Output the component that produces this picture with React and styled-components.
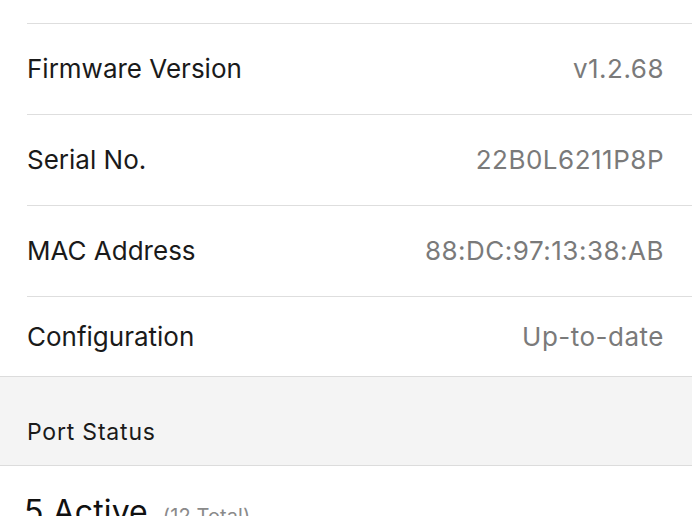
import React from "react";
import styled, { createGlobalStyle } from "styled-components";

const Global = createGlobalStyle`
  html, body { margin: 0; padding: 0; background: #fff; }
  body { font-family: Inter, "Noto Sans", sans-serif; -webkit-font-smoothing: antialiased; }
`;

const Page = styled.div`
  width: 692px;
  height: 516px;
  overflow: hidden;
  background: #fff;
`;

const List = styled.div`
  padding-top: 23px;
`;

const Row = styled.div`
  margin-left: 27px;
  padding-right: 28px;
  height: ${(p) => p.$h}px;
  border-top: 1px solid #dedede;
  display: flex;
  align-items: center;
  justify-content: space-between;
  box-sizing: border-box;
  padding-bottom: 1px;
`;

const Label = styled.span`
  font-size: 26px;
  color: #1a1a1a;
`;

const Value = styled.span`
  font-size: 26px;
  letter-spacing: 0.5px;
  color: #7a7a7a;
`;

const SectionHeader = styled.div`
  background: #f4f4f4;
  border-top: 1px solid #dcdcdc;
  border-bottom: 1px solid #dcdcdc;
  height: 90px;
  box-sizing: border-box;
  display: flex;
  align-items: flex-end;
  padding: 0 0 19px 27px;
`;

const HeaderText = styled.span`
  font-size: 23px;
  letter-spacing: 0.8px;
  color: #1a1a1a;
`;

const Summary = styled.div`
  display: flex;
  align-items: baseline;
  gap: 15px;
  padding: 26px 0 0 24px;
`;

const Big = styled.span`
  font-size: 32px;
  font-weight: 400;
  letter-spacing: 0.1px;
  color: #111;
`;

const Small = styled.span`
  font-size: 20px;
  letter-spacing: 0.1px;
  color: #8a8a8a;
`;

const rows = [
  ["Firmware Version", "v1.2.68", 91],
  ["Serial No.", "22B0L6211P8P", 91],
  ["MAC Address", "88:DC:97:13:38:AB", 91],
  ["Configuration", "Up-to-date", 80],
];

export default function App() {
  return (
    <Page>
      <Global />
      <List>
        {rows.map(([l, v, h]) => (
          <Row key={l} $h={h}>
            <Label>{l}</Label>
            <Value>{v}</Value>
          </Row>
        ))}
      </List>
      <SectionHeader>
        <HeaderText>Port Status</HeaderText>
      </SectionHeader>
      <Summary>
        <Big>5 Active</Big>
        <Small>(12 Total)</Small>
      </Summary>
    </Page>
  );
}
